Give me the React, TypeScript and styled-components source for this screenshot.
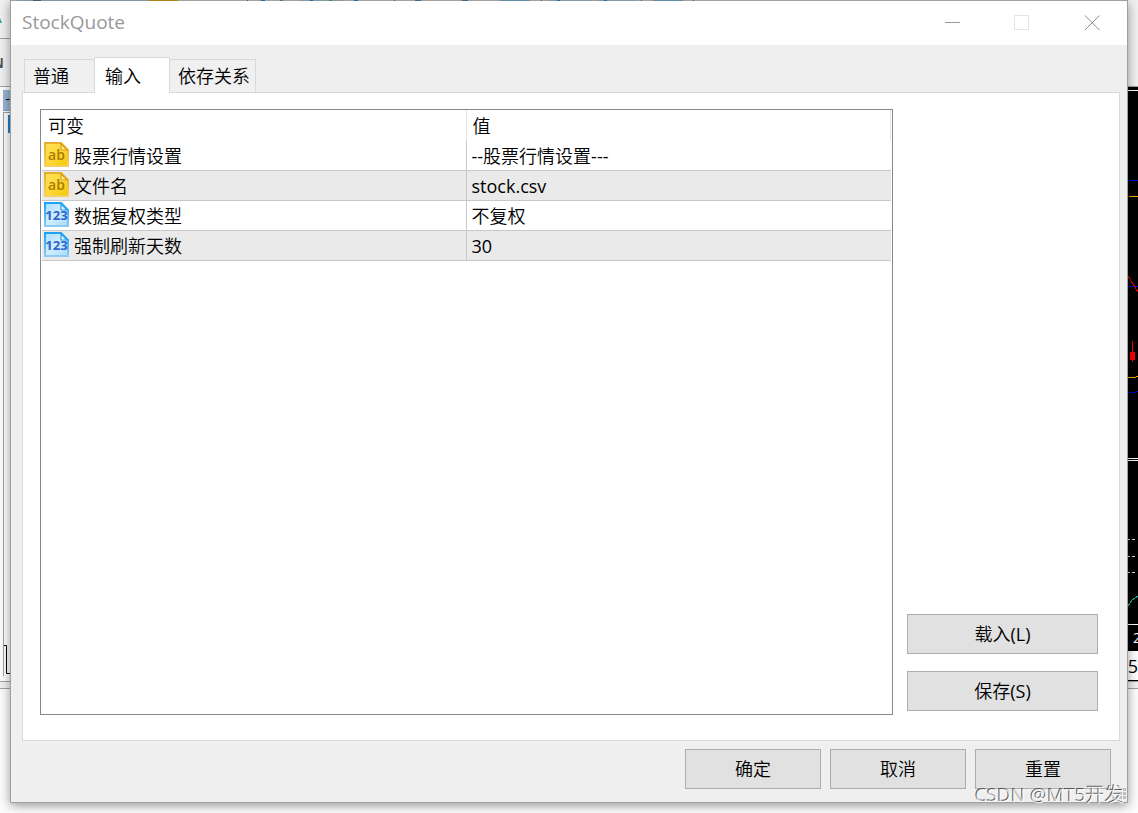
import React, { useState } from 'react';
import styled, { createGlobalStyle } from 'styled-components';

const Global = createGlobalStyle`
  * { box-sizing: border-box; }
  body { margin: 0; background: #fff; }
  body, button, table {
    font-family: 'Open Sans', 'Noto Sans CJK SC DemiLight', 'Noto Sans CJK SC', sans-serif;
    font-size: 18px;
    line-height: 24px;
    color: #000;
  }
`;

const Desktop = styled.div`
  position: relative;
  display: flex;
  min-height: 100vh;
  overflow: hidden;
`;

const Edge = styled.div`
  flex: none;
  width: 10px;
  display: flex;
  flex-direction: column;
  overflow: hidden;
  background: #fcfcfc;
`;

const EdgeBar = styled.div<{ $h: number }>`
  flex: none;
  display: flex;
  align-items: center;
  height: ${p => p.$h}px;
  background: #f0f0f0;
  border-bottom: 1px solid #a0a0a0;
  overflow: hidden;
`;

const EdgeLetter = styled.span`
  width: 4px;
  display: flex;
  justify-content: flex-end;
  overflow: hidden;
  font-size: 14px;
  font-weight: 700;
  color: #555;
`;

const PanelTitle = styled.div`
  flex: none;
  height: 21px;
  margin: 3px 0 1px 3px;
  background: #99b4d1;
  border-bottom: 1px solid #8ba3bf;
  font-size: 14px;
  line-height: 18px;
  text-align: right;
`;

const PanelBody = styled.div`
  flex: none;
  height: 564px;
  margin: 0 0 5px 3px;
  border-top: 1px solid #a0a0a0;
  border-left: 1px solid #a0a0a0;
  background: #fff;
  display: flex;
  flex-direction: column;
  justify-content: space-between;
`;

const EdgeSplitter = styled.div`
  flex: none;
  height: 8px;
  border-top: 1px solid #a0a0a0;
  border-bottom: 1px solid #a0a0a0;
  background: #f0f0f0;
`;

const AxisLabel = styled.div<{ $dark?: boolean }>`
  flex: none;
  display: flex;
  height: ${p => (p.$dark ? 26 : 30)}px;
  padding-left: ${p => (p.$dark ? 5 : 0)}px;
  justify-content: ${p => (p.$dark ? 'flex-start' : 'flex-end')};
  align-items: center;
  overflow: hidden;
  background: ${p => (p.$dark ? '#000' : '#fff')};
  color: ${p => (p.$dark ? '#fff' : '#000')};
  border-bottom: ${p => (p.$dark ? 0 : 1)}px solid #000;
  font-size: ${p => (p.$dark ? 14 : 18)}px;
`;

const Dialog = styled.section`
  position: relative;
  flex: 1;
  min-width: 0;
  display: flex;
  flex-direction: column;
  margin-bottom: 10px;
  background: #efefef;
  border: 1px solid #a0a0a0;
  box-shadow: 0 3px 10px rgba(0, 0, 0, 0.4);
`;

const TopTint = styled.svg`
  position: absolute;
  top: -1px;
  left: 0;
`;

const TitleBar = styled.header`
  display: flex;
  align-items: center;
  height: 44px;
  padding-left: 11px;
  background: #fff;
`;

const Title = styled.h1`
  flex: 1;
  margin: 0;
  padding-bottom: 2px;
  font-size: 19px;
  font-weight: 400;
  color: #999;
`;

const CaptionButton = styled.button`
  width: 70px;
  height: 44px;
  padding: 0;
  border: 0;
  background: none;
  svg { display: block; margin: 0 auto; }
`;

const TabList = styled.div`
  position: relative;
  display: flex;
  align-items: flex-end;
  height: 47px;
  padding-left: 13px;
`;

const Tab = styled.button<{ $active: boolean; $w: number }>`
  width: ${p => p.$w}px;
  height: ${p => (p.$active ? 36 : 33)}px;
  margin: 0 -1px ${p => (p.$active ? -1 : 0)}px 0;
  padding: 0 0 0 ${p => (p.$active ? 10 : 8)}px;
  text-align: left;
  background: ${p => (p.$active ? '#fff' : '#f0f0f0')};
  border: 1px solid #d9d9d9;
  border-bottom: 0;
  z-index: ${p => (p.$active ? 1 : 0)};
`;

const Page = styled.div`
  flex: 1;
  display: flex;
  gap: 14px;
  margin: 0 7px 0 11px;
  padding: 16px 21px 25px 17px;
  background: #fff;
  border: 1px solid #d9d9d9;
`;

const ListBox = styled.div`
  flex: 1;
  min-width: 0;
  padding: 0 1px;
  border: 1px solid #828790;
`;

const Grid = styled.table`
  width: 100%;
  table-layout: fixed;
  border-collapse: separate;
  border-spacing: 0;
`;

const HeadCell = styled.th`
  height: 31px;
  padding: 1px 6px 0;
  text-align: left;
  font-weight: 400;
  border-right: 1px solid #e5e5e5;
  &:first-child { width: calc(50% - 1px); }
`;

const Row = styled.tr<{ $shaded: boolean }>`
  background: ${p => (p.$shaded ? '#eaeaea' : '#fff')};
`;

const Cell = styled.td`
  height: 30px;
  padding: 0 5px;
  border-bottom: 1px solid #c8c8c8;
  &:first-child {
    padding: 0 2px;
    border-right: 1px solid #c8c8c8;
  }
`;

const NameLine = styled.div`
  display: flex;
  align-items: flex-start;
  gap: 5px;
  height: 29px;
  span { padding-top: 3px; }
  svg { flex: none; margin-top: 1px; }
`;

const SideColumn = styled.div`
  display: flex;
  flex-direction: column;
  justify-content: flex-end;
  gap: 17px;
  padding-bottom: 4px;
`;

const PushButton = styled.button<{ $wide?: boolean }>`
  width: ${p => (p.$wide ? 191 : 136)}px;
  height: 40px;
  padding: 0;
  background: #e1e1e1;
  border: 1px solid #adadad;
`;

const Footer = styled.footer`
  display: flex;
  justify-content: flex-end;
  gap: 9px;
  padding: 8px 16px 13px;
`;

const Grip = styled.svg`
  position: absolute;
  right: 0;
  bottom: 1px;
`;

const Watermark = styled.div`
  position: absolute;
  right: 14px;
  bottom: 6px;
  font-size: 19px;
  line-height: 24px;
  color: rgba(255, 255, 255, 0.75);
  text-shadow: -1px -1px 0 rgba(70, 70, 70, 0.85);
  white-space: nowrap;
`;

const TypeIcon = ({ kind }: { kind: 'ab' | '123' }) => {
  const text = kind === 'ab';
  const id = text ? 'fill-text' : 'fill-number';
  return (
    <svg width="25" height="25" viewBox="0 0 25 25" aria-hidden="true">
      <defs>
        <linearGradient id={id} x1="0" y1="0" x2="1" y2="1">
          <stop offset="0" stopColor={text ? '#ffe25c' : '#a8e0ff'} />
          <stop offset="0.5" stopColor={text ? '#ffd83a' : '#d0eeff'} />
          <stop offset="1" stopColor={text ? '#f5c800' : '#a8d8f8'} />
        </linearGradient>
        <linearGradient id={`${id}-edge`} x1="0" y1="0" x2="0" y2="1">
          <stop offset="0" stopColor={text ? '#e8ac2c' : '#1ea2f6'} />
          <stop offset="1" stopColor={text ? '#f5d060' : '#8ecbf0'} />
        </linearGradient>
      </defs>
      <path d="M1 1H17L24 8V24H1Z" fill={`url(#${id})`} stroke={`url(#${id}-edge)`} strokeWidth="2" />
      <path d="M17 2V8H23Z" fill={text ? '#fff0a0' : '#e8f8ff'} stroke={text ? '#d8a010' : '#2aa0ee'} strokeWidth="1.2" />
      <text
        x="12.5"
        y="18"
        textAnchor="middle"
        fontFamily="'Open Sans', sans-serif"
        fontSize={text ? 14 : 13}
        fontWeight={text ? 600 : 700}
        fill={text ? '#a87c00' : '#2b62cc'}
      >
        {kind}
      </text>
    </svg>
  );
};

const tabs = [
  { label: '普通', width: 71 },
  { label: '输入', width: 76 },
  { label: '依存关系', width: 87 },
];

const rows: { kind: 'ab' | '123'; name: string; value: string }[] = [
  { kind: 'ab', name: '股票行情设置', value: '--股票行情设置---' },
  { kind: 'ab', name: '文件名', value: 'stock.csv' },
  { kind: '123', name: '数据复权类型', value: '不复权' },
  { kind: '123', name: '强制刷新天数', value: '30' },
];

const tints: [number, number, string][] = [
  [6, 130, '#8496a8'], [22, 8, '#455a70'], [137, 30, '#a98516'], [236, 1, '#555'],
  [250, 4, '#2468a0'], [269, 3, '#3f9040'], [288, 44, '#8598a8'], [299, 3, '#2468a0'],
  [318, 3, '#3f9040'], [343, 4, '#2468a0'], [383, 1, '#555'], [404, 6, '#426888'],
  [451, 6, '#426888'], [489, 30, '#648ba8'], [530, 1, '#555'], [535, 45, '#8598a8'],
  [546, 3, '#2468a0'], [583, 44, '#8598a8'], [593, 3, '#2468a0'], [630, 1, '#555'],
  [642, 30, '#648ba8'], [682, 1, '#555'],
];

export default function App() {
  const [active, setActive] = useState(1);
  return (
    <Desktop>
      <Global />
      <Edge>
        <EdgeBar $h={39}>
          <svg width="4" height="10" aria-hidden="true"><path d="M0 4L2 9H0Z" fill="#2aa5a0" /></svg>
        </EdgeBar>
        <EdgeBar $h={48}><EdgeLetter>N</EdgeLetter></EdgeBar>
        <PanelTitle>-</PanelTitle>
        <PanelBody>
          <svg width="6" height="22" aria-hidden="true"><path d="M4 2H6V20H4Z" fill="#2b7fc4" /></svg>
          <svg width="6" height="31" aria-hidden="true"><path d="M0 .5H2.5V28.5H6" fill="none" stroke="#000" /></svg>
        </PanelBody>
        <EdgeSplitter />
      </Edge>

      <Dialog role="dialog" aria-label="StockQuote">
        <TopTint width="700" height="1" aria-hidden="true">
          {tints.map(([x, w, c]) => <rect key={`${x}-${w}`} x={x} width={w} height="1" fill={c} />)}
        </TopTint>
        <TitleBar>
          <Title>StockQuote</Title>
          <CaptionButton aria-label="最小化">
            <svg width="16" height="16"><path d="M1 7.5H16" stroke="#999" /></svg>
          </CaptionButton>
          <CaptionButton aria-label="最大化" disabled>
            <svg width="16" height="16"><rect x=".5" y=".5" width="14" height="14" fill="none" stroke="#e5e5e5" /></svg>
          </CaptionButton>
          <CaptionButton aria-label="关闭">
            <svg width="16" height="16"><path d="M1 .5L15.5 15M15.5 .5L1 15" stroke="#8c8c8c" /></svg>
          </CaptionButton>
        </TitleBar>

        <TabList role="tablist">
          {tabs.map((t, i) => (
            <Tab
              key={t.label}
              role="tab"
              aria-selected={i === active}
              $active={i === active}
              $w={t.width}
              onClick={() => setActive(i)}
            >
              {t.label}
            </Tab>
          ))}
        </TabList>

        <Page role="tabpanel">
          <ListBox>
            <Grid>
              <thead>
                <tr><HeadCell>可变</HeadCell><HeadCell>值</HeadCell></tr>
              </thead>
              <tbody>
                {rows.map((r, i) => (
                  <Row key={r.name} $shaded={i % 2 === 1}>
                    <Cell><NameLine><TypeIcon kind={r.kind} /><span>{r.name}</span></NameLine></Cell>
                    <Cell>{r.value}</Cell>
                  </Row>
                ))}
              </tbody>
            </Grid>
          </ListBox>
          <SideColumn>
            <PushButton $wide>载入(L)</PushButton>
            <PushButton $wide>保存(S)</PushButton>
          </SideColumn>
        </Page>

        <Footer>
          <PushButton>确定</PushButton>
          <PushButton>取消</PushButton>
          <PushButton>重置</PushButton>
        </Footer>
        <Grip width="8" height="14" aria-hidden="true">
          {[0, 4].map(x => [1, 5, 9].map(y => <rect key={`${x}${y}`} x={x} y={y} width="3" height="3" fill="#bfbfbf" />))}
        </Grip>
      </Dialog>

      <Edge>
        <EdgeBar $h={87} />
        <svg width="10" height="538" aria-hidden="true" shapeRendering="crispEdges" style={{ flex: 'none' }}>
          <rect width="10" height="538" fill="#000" />
          <path d="M0 3.5H10M0 371.5H10M0 373.5H10M0 537.5H10" stroke="#fff" />
          <path d="M0 93.5H10M0 199.5H10M0 305.5H8M8 304.5H10" stroke="#0000c8" />
          <path d="M1 109.5H10M0 290.5H8M8 289.5H10" stroke="#ffa500" />
          <path d="M0 189L10 205" stroke="#e00000" fill="none" />
          <path d="M4.5 254V275" stroke="#f00" />
          <rect x="2" y="265" width="5" height="8" fill="#f00" />
          <path d="M0 452.5H2M4 452.5H7M0 469.5H2M4 469.5H7M0 485.5H2M4 485.5H7" stroke="#ddd" />
          <path d="M0 519L4 513L10 509" stroke="#26a69a" fill="none" />
        </svg>
        <AxisLabel $dark>2</AxisLabel>
        <AxisLabel>55</AxisLabel>
        <EdgeSplitter />
      </Edge>

      <Watermark>CSDN @MT5开发</Watermark>
    </Desktop>
  );
}
